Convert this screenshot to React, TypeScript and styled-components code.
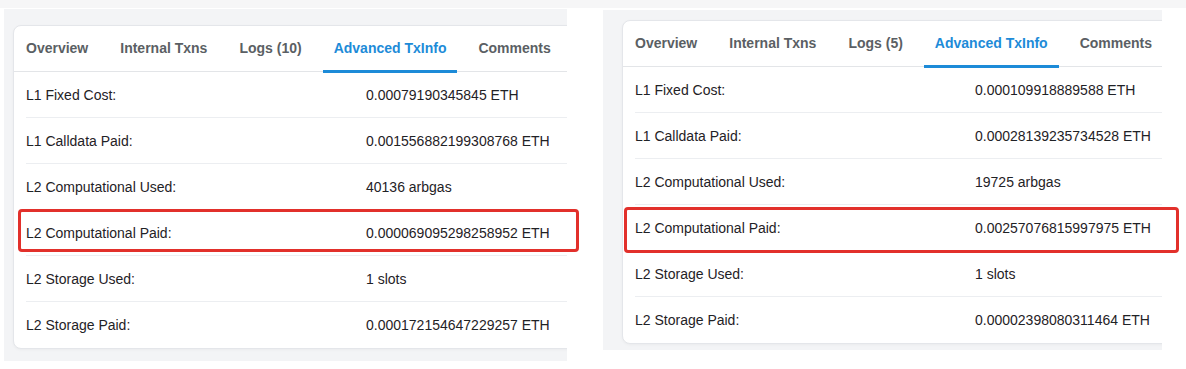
import styled, { createGlobalStyle } from "styled-components";

type Field = { label: string; value: string };

type PanelData = {
  logs: number;
  fields: Field[];
};

const panels: PanelData[] = [
  {
    logs: 10,
    fields: [
      { label: "L1 Fixed Cost:", value: "0.00079190345845 ETH" },
      { label: "L1 Calldata Paid:", value: "0.001556882199308768 ETH" },
      { label: "L2 Computational Used:", value: "40136 arbgas" },
      { label: "L2 Computational Paid:", value: "0.000069095298258952 ETH" },
      { label: "L2 Storage Used:", value: "1 slots" },
      { label: "L2 Storage Paid:", value: "0.000172154647229257 ETH" },
    ],
  },
  {
    logs: 5,
    fields: [
      { label: "L1 Fixed Cost:", value: "0.000109918889588 ETH" },
      { label: "L1 Calldata Paid:", value: "0.00028139235734528 ETH" },
      { label: "L2 Computational Used:", value: "19725 arbgas" },
      { label: "L2 Computational Paid:", value: "0.00257076815997975 ETH" },
      { label: "L2 Storage Used:", value: "1 slots" },
      { label: "L2 Storage Paid:", value: "0.00002398080311464 ETH" },
    ],
  },
];

function TxPanel({ data }: { data: PanelData }) {
  const tabs = ["Overview", "Internal Txns", `Logs (${data.logs})`, "Advanced TxInfo", "Comments"];
  return (
    <Card>
      <TabBar>
        {tabs.map((t) => (
          <Tab key={t} $active={t === "Advanced TxInfo"}>
            {t}
          </Tab>
        ))}
      </TabBar>
      <Rows>
        {data.fields.map((f, i) => (
          <Row key={f.label} $last={i === data.fields.length - 1}>
            <Label>{f.label}</Label>
            <Value>{f.value}</Value>
          </Row>
        ))}
      </Rows>
    </Card>
  );
}

function App() {
  return (
    <>
      <GlobalStyle />
      <Page>
        <TopBand />
        <PanelRow>
          <Shot $ml={4} $mt={1} $w={563} $h={352} $pl={9} $pt={16}>
            <TxPanel data={panels[0]} />
          </Shot>
          <Shot $ml={36} $mt={2} $w={559} $h={340} $pl={19} $pt={10}>
            <TxPanel data={panels[1]} />
          </Shot>
        </PanelRow>
        <Highlight $x={18} $y={209} $w={561} $h={43} />
        <Highlight $x={624} $y={207} $w={555} $h={46} />
      </Page>
    </>
  );
}

export default App;

const GlobalStyle = createGlobalStyle`
  html, body {
    margin: 0;
    padding: 0;
    background: #ffffff;
  }
  body {
    font-family: "Liberation Sans", Arial, Helvetica, sans-serif;
    color: #212529;
  }
`;

const Page = styled.div`
  position: relative;
  width: 1186px;
  height: 369px;
  overflow: hidden;
  background: #ffffff;
`;

const TopBand = styled.div`
  height: 8px;
  background: #f6f6f7;
`;

const PanelRow = styled.div`
  display: flex;
  align-items: flex-start;
`;

const Shot = styled.div<{ $ml: number; $mt: number; $w: number; $h: number; $pl: number; $pt: number }>`
  flex: none;
  margin-left: ${(p) => p.$ml}px;
  margin-top: ${(p) => p.$mt}px;
  width: ${(p) => p.$w}px;
  height: ${(p) => p.$h}px;
  padding-left: ${(p) => p.$pl}px;
  padding-top: ${(p) => p.$pt}px;
  box-sizing: border-box;
  background: #f3f4f6;
  overflow: hidden;
`;

const Card = styled.div`
  width: 640px;
  background: #ffffff;
  border: 1px solid #e4e6ea;
  border-radius: 8px;
  box-shadow: 0 1px 3px rgba(0, 0, 0, 0.04);
`;

const TabBar = styled.div`
  display: flex;
  gap: 10px;
  height: 45px;
  padding-left: 1px;
  border-bottom: 1px solid #e3e5e8;
`;

const Tab = styled.div<{ $active?: boolean }>`
  display: flex;
  align-items: center;
  padding: 0 11px;
  margin-bottom: -1px;
  font-size: 14px;
  font-weight: 700;
  color: ${(p) => (p.$active ? "#1d8bd8" : "#5b5f64")};
  border-bottom: 3px solid ${(p) => (p.$active ? "#1d8bd8" : "transparent")};
  box-sizing: border-box;
  height: 47px;
`;

const Rows = styled.div`
  display: flex;
  flex-direction: column;
`;

const Row = styled.div<{ $last?: boolean }>`
  display: grid;
  grid-template-columns: 340px 1fr;
  align-items: center;
  height: 46px;
  box-sizing: border-box;
  margin-left: 12px;
  font-size: 14px;
  border-bottom: 1px solid ${(p) => (p.$last ? "transparent" : "#eceef1")};
`;

const Label = styled.span`
  color: #1f2226;
`;

const Value = styled.span`
  color: #1f2226;
`;

const Highlight = styled.div<{ $x: number; $y: number; $w: number; $h: number }>`
  position: absolute;
  left: ${(p) => p.$x}px;
  top: ${(p) => p.$y}px;
  width: ${(p) => p.$w}px;
  height: ${(p) => p.$h}px;
  box-sizing: border-box;
  border: 3px solid #e2302b;
  border-radius: 4px;
  pointer-events: none;
`;
